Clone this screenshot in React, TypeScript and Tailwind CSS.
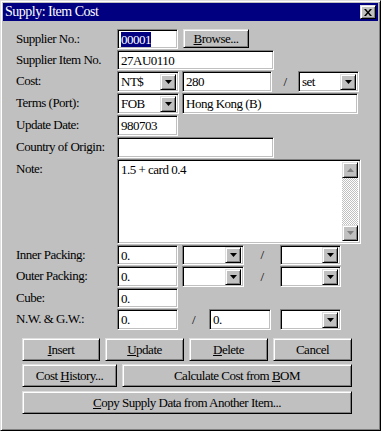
import type { ReactNode } from "react";

const sunken =
  "border border-t-[#808080] border-l-[#808080] border-r-white border-b-white shadow-[inset_1px_1px_0_#000,inset_-1px_-1px_0_#c0c0c0] bg-white";
const raised =
  "border border-t-[#dfdfdf] border-l-[#dfdfdf] border-r-black border-b-black shadow-[inset_1px_1px_0_#fff,inset_-1px_-1px_0_#808080] bg-[#c0c0c0]";

function Field({ w, value, selected }: { w: string; value?: string; selected?: boolean }) {
  return (
    <div className={`${sunken} ${w} h-full flex items-center pl-[3px] overflow-hidden`}>
      {selected ? (
        <span className="bg-[#000080] text-white leading-[15px]">{value}</span>
      ) : (
        <span className="leading-[15px]">{value}</span>
      )}
    </div>
  );
}

function Arrow({ color = "#000" }: { color?: string }) {
  return (
    <svg width="7" height="4" viewBox="0 0 7 4">
      <path d="M0 0H7L3.5 4Z" fill={color} />
    </svg>
  );
}

function Combo({ w, value }: { w: string; value?: string }) {
  return (
    <div className={`${sunken} ${w} h-full flex items-center pl-[3px] pr-[2px]`}>
      <span className="flex-1 leading-[15px]">{value}</span>
      <div className={`${raised} w-[16px] h-[16px] flex items-center justify-center`}>
        <Arrow />
      </div>
    </div>
  );
}

function Btn({ w, children }: { w: string; children: ReactNode }) {
  return (
    <div className={`${raised} ${w} h-full flex items-center justify-center`}>{children}</div>
  );
}

function Row({ label, h, children }: { label?: string; h: string; children?: ReactNode }) {
  return (
    <div className={`flex ${h}`}>
      <div className="w-[101px] pt-[2px] leading-[15px]">{label}</div>
      <div className="flex h-full">{children}</div>
    </div>
  );
}

function Slash({ w }: { w: string }) {
  return <div className={`${w} flex items-center justify-center`}>/</div>;
}

export default function App() {
  return (
    <div
      className="w-[381px] h-[431px] bg-[#c0c0c0] border border-t-[#dfdfdf] border-l-[#dfdfdf] border-r-black border-b-black shadow-[inset_1px_1px_0_#fff,inset_-1px_-1px_0_#808080] p-[2px] text-[13px] tracking-[-0.5px] text-black"
      style={{ fontFamily: '"Liberation Serif", serif' }}
    >
      <div className="h-[18px] bg-[#000080] flex items-center justify-between pl-[2px] pr-[2px]">
        <span className="text-white text-[14px] leading-[16px]">Supply: Item Cost</span>
        <div className={`${raised} w-[16px] h-[14px] flex items-center justify-center`}>
          <svg width="8" height="7" viewBox="0 0 8 7">
            <path d="M0 0h2l2 2.5L6 0h2L5 3.5 8 7H6L4 4.5 2 7H0l3-3.5Z" fill="#000" />
          </svg>
        </div>
      </div>

      <div className="pl-[13px] pt-[8px] flex flex-col gap-[1px]">
        <Row label="Supplier No.:" h="h-[20px]">
          <Field w="w-[61px]" value="00001" selected />
          <div className="w-[5px]" />
          <div className="h-[19px] flex">
            <Btn w="w-[66px]">
              <span>
                <u>B</u>rowse...
              </span>
            </Btn>
          </div>
        </Row>
        <Row label="Supplier Item No." h="h-[20px]">
          <Field w="w-[157px]" value="27AU0110" />
        </Row>
        <Row label="Cost:" h="h-[21px]">
          <Combo w="w-[62px]" value="NT$" />
          <div className="w-[3px]" />
          <Field w="w-[90px]" value="280" />
          <Slash w="w-[26px]" />
          <Combo w="w-[61px]" value="set" />
        </Row>
        <Row label="Terms (Port):" h="h-[21px]">
          <Combo w="w-[62px]" value="FOB" />
          <div className="w-[3px]" />
          <Field w="w-[176px]" value="Hong Kong (B)" />
        </Row>
        <Row label="Update Date:" h="h-[21px]">
          <Field w="w-[61px]" value="980703" />
        </Row>
        <Row label="Country of Origin:" h="h-[21px]">
          <Field w="w-[157px]" />
        </Row>
        <Row label="Note:" h="h-[85px]">
          <div className={`${sunken} w-[244px] h-full flex p-[2px]`}>
            <div className="flex-1 pl-[1px] leading-[15px]">1.5 + card 0.4</div>
            <div className="w-[16px] h-full flex flex-col bg-[repeating-conic-gradient(#fff_0%_25%,#c0c0c0_0%_50%)] bg-[length:2px_2px]">
              <div className={`${raised} h-[16px] flex items-center justify-center`}>
                <svg width="7" height="4" viewBox="0 0 7 4">
                  <path d="M0 4H7L3.5 0Z" fill="#808080" />
                </svg>
              </div>
              <div className="flex-1" />
              <div className={`${raised} h-[16px] flex items-center justify-center`}>
                <Arrow color="#808080" />
              </div>
            </div>
          </div>
        </Row>
        <Row label="Inner Packing:" h="h-[20px]">
          <Field w="w-[61px]" value="0." />
          <div className="w-[4px]" />
          <Combo w="w-[62px]" />
          <Slash w="w-[36px]" />
          <Combo w="w-[61px]" />
        </Row>
        <Row label="Outer Packing:" h="h-[21px]">
          <Field w="w-[61px]" value="0." />
          <div className="w-[4px]" />
          <Combo w="w-[62px]" />
          <Slash w="w-[36px]" />
          <Combo w="w-[61px]" />
        </Row>
        <Row label="Cube:" h="h-[20px]">
          <Field w="w-[61px]" value="0." />
        </Row>
        <Row label="N.W. & G.W.:" h="h-[21px]">
          <Field w="w-[61px]" value="0." />
          <Slash w="w-[31px]" />
          <Field w="w-[62px]" value="0." />
          <div className="w-[9px]" />
          <Combo w="w-[61px]" />
        </Row>
      </div>

      <div className="pl-[19px] mt-[8px] flex flex-col gap-[3px]">
        <div className="flex gap-[5px] h-[23px]">
          <Btn w="w-[78px]">
            <span>
              <u>I</u>nsert
            </span>
          </Btn>
          <Btn w="w-[79px]">
            <span>
              <u>U</u>pdate
            </span>
          </Btn>
          <Btn w="w-[79px]">
            <span>
              <u>D</u>elete
            </span>
          </Btn>
          <Btn w="w-[79px]">
            <span>Cancel</span>
          </Btn>
        </div>
        <div className="flex gap-[5px] h-[23px]">
          <Btn w="w-[95px]">
            <span>
              Cost <u>H</u>istory...
            </span>
          </Btn>
          <Btn w="w-[230px]">
            <span>
              Calculate Cost from <u>B</u>OM
            </span>
          </Btn>
        </div>
        <div className="flex h-[23px] mt-[1px]">
          <Btn w="w-[330px]">
            <span>
              <u>C</u>opy Supply Data from Another Item...
            </span>
          </Btn>
        </div>
      </div>
    </div>
  );
}
